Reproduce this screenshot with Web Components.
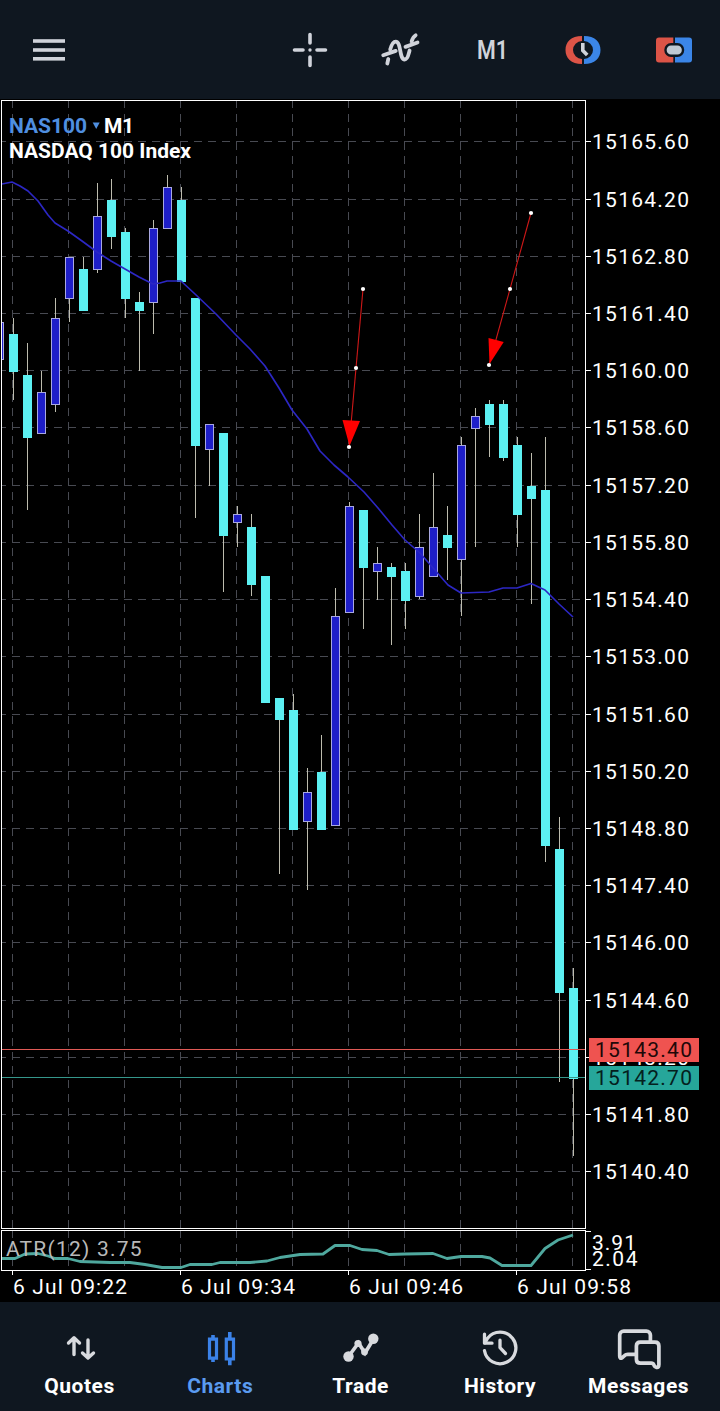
<!DOCTYPE html>
<html lang="en">
<head>
<meta charset="utf-8">
<title>NAS100 M1</title>
<style>
  html, body { margin: 0; background: #000; }
  body { width: 720px; height: 1411px; overflow: hidden; font-family: Roboto, "Liberation Sans", sans-serif; }
</style>
</head>
<body>
<trading-app></trading-app>
<script>
const ICONS = {
  menu: '<g fill="#d0d3da"><rect x="9" y="14.200" width="32" height="3.600"/><rect x="9" y="23.200" width="32" height="3.600"/><rect x="9" y="32" width="32" height="3.600"/></g>',
  cross: '<g stroke="#d0d3da" stroke-width="3.600" stroke-linecap="round"><path d="M25 9.500v8.500M25 32v8.500M9.500 25h8.500M32 25h8.500"/></g><circle cx="25" cy="25" r="1.700" fill="#d0d3da"/>',
  indicator: '<g fill="none" stroke="#d0d3da" stroke-width="3.800" stroke-linecap="round" stroke-linejoin="round"><path d="M11.300 38.500L12.300 34M14.200 24.500C15.500 20 17 16.700 19.700 16.700C25.500 16.700 23 34.500 28.700 34.500C32 34.500 32.500 29 33.600 25.500M35.600 16.500C36.500 13.500 37.500 11.500 39.600 10.300"/><path d="M7.200 30.200L19.700 25.900M29.500 21.900L41.500 17.500"/></g>',
  period: '<text x="10" y="34" font-size="25" font-weight="600" fill="#d0d3da" textLength="31" lengthAdjust="spacingAndGlyphs">M1</text>',
  clock: '<path d="M24 11C13 11 7.500 17 7.500 25S13 39 24 39V34A9 9 0 0 1 24 16Z" fill="#dc5447"/><path d="M26 11C37 11 42.500 17 42.500 25S37 39 26 39V34A9 9 0 0 0 26 16Z" fill="#3b86e8"/><path d="M24.800 18v7.500l4.400 4.600" fill="none" stroke="#d0d3da" stroke-width="3.600"/>',
  order: '<path d="M10 12.500h14.300v25H10a3 3 0 0 1-3-3v-19a3 3 0 0 1 3-3z" fill="#dc5447"/><path d="M26 12.500h14a3 3 0 0 1 3 3v19a3 3 0 0 1-3 3H26z" fill="#3b86e8"/><rect x="16.500" y="19.300" width="17.500" height="11.500" rx="5.500" fill="#bfc9d3" stroke="#0f1720" stroke-width="2.400"/>',
  quotes: '<g fill="none" stroke="#d8dade" stroke-width="3.400" stroke-linecap="round" stroke-linejoin="round"><path d="M24 31.500V15M18.500 20L24 14.700L29.500 20M38 17v17M32.500 30L38 35L43.500 30"/></g>',
  charts: '<g fill="none" stroke="#3b82e8" stroke-width="3.200"><path d="M19.500 16.200h7v19h-7zM36.300 16.200h7.200v19.800h-7.200z"/><path d="M23 12v4M23 35v4M39.800 9v7M39.800 36v6.300" stroke-width="3.600"/></g>',
  trade: '<g transform="translate(0 .5)"><path d="M18.500 33L28.500 19.500L35 29.500L43.500 15.500" fill="none" stroke="#d8dade" stroke-width="3.600"/><g fill="#d8dade"><circle cx="18.500" cy="33" r="5.200"/><circle cx="28" cy="20" r="3.600"/><circle cx="34.500" cy="28.500" r="3.400"/><circle cx="43.300" cy="15.300" r="5.200"/></g></g>',
  history: '<g transform="translate(0 .7)" fill="none" stroke="#d8dade" stroke-width="3.300" stroke-linecap="round" stroke-linejoin="round"><path d="M14.500 27A15.800 15.800 0 1 0 17.600 14.500L15 19"/><path d="M14.500 10.500V19.500H22M30 16.500V24L35.500 29.800"/></g>',
  messages: '<g transform="translate(-.6 -2.400)" fill="none" stroke="#d8dade" stroke-width="3.700" stroke-linecap="round" stroke-linejoin="round"><path d="M41 20V14.500a4 4 0 0 0-4-4H14.300a4 4 0 0 0-4 4V35.500q0 3 2.300 1.700l2.800-2.500q1-1 3-1H26"/><path d="M31 21.500H45.500q4 0 4 4V44q0 3.200-2.500 2.700q-2-.3-2.700-2.700q-.5-1.400-2.500-1.400H31q-4 0-4-4V25.500q0-4 4-4z"/></g>'
};

// Each candle: high, body top, body bottom, low (chart pixels), then 1 for a rising bar.
const CANDLES = [
  [322,322,360,360,1],[318,334,372,400,0],[343,375,438,510,0],[371,392,434,434,1],[298,318,405,412,1],
  [257,257,299,322,1],[257,269,311,311,0],[183,216,270,273,1],[179,200,237,249,0],[228,232,299,318,0],
  [292,302,311,371,0],[220,228,303,334,1],[175,187,229,229,1],[187,200,282,282,0],[298,298,446,518,0],
  [424,424,450,486,1],[433,433,536,592,0],[506,514,523,547,1],[514,527,585,596,0],[576,576,703,703,0],
  [698,698,720,874,0],[694,710,830,830,0],[768,792,822,890,1],[735,772,830,830,0],[588,616,826,826,1],
  [502,506,613,613,1],[510,510,568,629,0],[547,563,572,600,1],[563,567,577,645,0],[563,571,601,629,0],
  [514,547,597,599,1],[473,527,577,577,1],[506,535,548,580,0],[437,445,560,616,1],[408,416,429,547,1],
  [400,404,425,457,0],[400,404,458,461,0],[437,445,515,547,0],[453,486,499,604,0],[437,490,846,862,0],
  [817,849,993,1082,0],[968,988,1079,1156,0]
];
const MA = '2,184 12,182 20,186 28,191 38,201 48,215 55,223 68,231 82,241 97,252 111,261 125,269 139,277 153,284 160,283 167,281 181,281 195,294 216,314 236,335 250,349 265,366 279,388 292,410 307,429 320,451 334,465 348,477 364,492 378,508 392,525 405,540 420,553 434,569 448,585 461,593 489,592 503,588 517,588 531,583.500 545,590 559,604 573,617';
const ATR = '2,1258.500 15,1258.500 25,1254 38,1253.500 48,1256 55,1258.500 68,1258.500 80,1261.500 95,1262 110,1262.500 130,1262.500 145,1264.500 162,1267.500 181,1267.500 190,1264.500 212,1264.500 220,1262.500 250,1262.500 267,1261 280,1257.500 300,1254.500 323,1254 335,1245.500 350,1245.500 362,1249.500 377,1250.500 389,1254.500 405,1254 433,1253.500 447,1258.500 461,1256.500 482,1256.500 490,1258 502,1265.500 531,1265.500 545,1248.500 558,1240 573,1235';
const GRID_Y = [141,199,256,313,370,427,485,542,599,656,714,771,828,885,942,1000,1057,1114,1171];
const TOP_Y = 99;

class ToolButton extends HTMLElement {
  constructor() {
    super();
    this.attachShadow({ mode: 'open' }).innerHTML =
      '<style>:host{display:block;width:50px;height:50px}svg{display:block}text{font-family:Roboto,sans-serif}</style>' +
      '<svg width="50" height="50" viewBox="0 0 50 50">' + ICONS[this.getAttribute('icon')] + '</svg>';
  }
}

class AppToolbar extends HTMLElement {
  constructor() {
    super();
    this.attachShadow({ mode: 'open' }).innerHTML =
      '<style>:host{display:flex;align-items:center;height:99px;box-sizing:border-box;padding:1px 21px 0 24px;background:#0f1720}' +
      '.tools{display:flex;margin-left:auto;gap:41px}</style>' +
      '<slot name="menu"></slot><div class="tools"><slot></slot></div>';
  }
}

class TabItem extends HTMLElement {
  constructor() {
    super();
    const color = this.hasAttribute('active') ? '#5a9bf0' : '#fff';
    this.attachShadow({ mode: 'open' }).innerHTML =
      '<style>:host{display:flex;flex-direction:column;align-items:center;padding-top:21px;color:' + color + '}' +
      'svg{display:block}span{font-weight:700;font-size:21px;line-height:27px;letter-spacing:.55px;white-space:nowrap;transform:translateX(var(--nudge,0))}</style>' +
      '<svg width="60" height="50" viewBox="0 0 60 50">' + ICONS[this.getAttribute('icon')] + '</svg><span><slot></slot></span>';
  }
}

class TabBar extends HTMLElement {
  constructor() {
    super();
    this.attachShadow({ mode: 'open' }).innerHTML =
      '<style>:host{display:grid;grid-template-columns:repeat(5,140px);height:109px;padding:0 10px;background:#0f1720}</style><slot></slot>';
  }
}

class PriceChart extends HTMLElement {
  constructor() {
    super();
    this.attachShadow({ mode: 'open' });
  }
  connectedCallback() {
    let s = '';
    for (const y of GRID_Y)
      s += `<path d="M2 ${y + .5}H585" class="grid" stroke-dashoffset="4"/>`;
    for (let x = 12.5; x < 585; x += 56)
      s += `<path d="M${x} 101V1228M${x} 1231V1270" class="grid" stroke-dashoffset="1"/>`;
    let c = '';
    CANDLES.forEach(([h, t, b, l, up], i) => {
      const x = 9 + 14 * (i - 1);
      c += `<rect x="${x + 4}" y="${h}" width="1" height="${l - h}" fill="#bdbcae"/>`;
      c += up
        ? `<rect x="${x + .5}" y="${t + .5}" width="8" height="${b - t - 1}" fill="#1e1ec8" stroke="#a9a8e0"/>`
        : `<rect x="${x}" y="${t}" width="9" height="${b - t}" fill="#5cf0f2"/>`;
    });
    s += `<g clip-path="url(#plot)">${c}</g>`;
    s += '<rect x="2" y="1049" width="583" height="1" fill="#e05a56"/><rect x="2" y="1077" width="583" height="1" fill="#35978b"/>';
    s += `<polyline points="${MA}" fill="none" stroke="#2c27c4" stroke-width="1.650" stroke-linejoin="round"/>`;
    s += `<polyline points="${ATR}" fill="none" stroke="#4fa89e" stroke-width="2.800" stroke-linejoin="round"/>`;
    const arrow = (p, head) => `<path d="M${p[0]}L${p[2]}" stroke="#d01818" stroke-width="1.100"/><path d="${head}" fill="#f00"/>` +
      p.map(q => { const [x, y] = q.split(' '); return `<circle cx="${x}" cy="${y}" r="2.100" fill="#fff"/>`; }).join('');
    s += arrow(['363 289', '356 368', '349 447'], 'M342.500 420L360 421L349.500 446Z');
    s += arrow(['531 213', '510 289', '489 365'], 'M488.500 338L503.700 342L489.500 364Z');
    s += '<g fill="none" stroke="#fff"><rect x="1.500" y="100.500" width="584" height="1128"/><rect x="1.500" y="1230.500" width="584" height="40"/><path d="M586 1231.500h5M586 1269.500h5"/></g>';
    for (const x of [12.5, 180.5, 348.5, 516.5]) s += `<path d="M${x} 1271v4" stroke="#fff"/>`;
    GRID_Y.forEach((y, i) => {
      s += `<path d="M586 ${y + .5}h5" stroke="#fff"/><text x="592" y="${y + 8}" textLength="97">${(15165.6 - 1.4 * i).toFixed(2)}</text>`;
    });
    s += '<text x="592" y="1250" textLength="44">3.91</text><text x="592" y="1266" textLength="45.500">2.04</text>';
    s += '<rect x="589" y="1038" width="110" height="24" fill="#ef5350"/><rect x="589" y="1066" width="110" height="24" fill="#26a69a"/>';
    s += '<text x="595" y="1057" textLength="97" fill="#200808">15143.40</text><text x="595" y="1085" textLength="97" fill="#04201d">15142.70</text>';
    ['09:22', '09:34', '09:46', '09:58'].forEach((t, i) => {
      s += `<text x="${13 + 168 * i}" y="1294" textLength="114">6 Jul ${t}</text>`;
    });
    s += '<text x="6" y="1256" textLength="135.500" fill="#b9b9b9">ATR(12) 3.75</text>';
    s += '<g font-weight="700"><text x="9" y="133" textLength="78" fill="#4f8fe0">NAS100</text><text x="104" y="133" textLength="30">M1</text><text x="9" y="158" textLength="182">NASDAQ 100 Index</text></g>';
    s += '<path d="M92.700 122.500h7l-3.500 6.500z" fill="#4f8fe0"/>';
    this.shadowRoot.innerHTML =
      `<style>:host{display:block;height:1203px;background:#000}svg{display:block}
        text{font-family:Roboto,sans-serif;font-size:21px}
        .grid{stroke:#484a52;stroke-dasharray:8 6}</style>
      <svg width="720" height="1203" viewBox="0 ${TOP_Y} 720 1203" fill="#fff"><defs><clipPath id="plot"><rect x="2" y="101" width="583" height="1127"/></clipPath></defs>${s}</svg>`;
  }
}

class TradingApp extends HTMLElement {
  constructor() {
    super();
    this.attachShadow({ mode: 'open' }).innerHTML = `
      <style>:host{display:flex;flex-direction:column;width:720px;height:1411px}</style>
      <app-toolbar>
        <tool-button slot="menu" icon="menu"></tool-button>
        <tool-button icon="cross"></tool-button>
        <tool-button icon="indicator"></tool-button>
        <tool-button icon="period"></tool-button>
        <tool-button icon="clock"></tool-button>
        <tool-button icon="order"></tool-button>
      </app-toolbar>
      <price-chart></price-chart>
      <tab-bar>
        <tab-item icon="quotes" style="--nudge:-.5px">Quotes</tab-item>
        <tab-item icon="charts" active style="--nudge:.3px">Charts</tab-item>
        <tab-item icon="trade" style="--nudge:.6px">Trade</tab-item>
        <tab-item icon="history">History</tab-item>
        <tab-item icon="messages" style="--nudge:-1.400px">Messages</tab-item>
      </tab-bar>`;
  }
}

customElements.define('tool-button', ToolButton);
customElements.define('app-toolbar', AppToolbar);
customElements.define('tab-item', TabItem);
customElements.define('tab-bar', TabBar);
customElements.define('price-chart', PriceChart);
customElements.define('trading-app', TradingApp);
</script>
</body>
</html>
